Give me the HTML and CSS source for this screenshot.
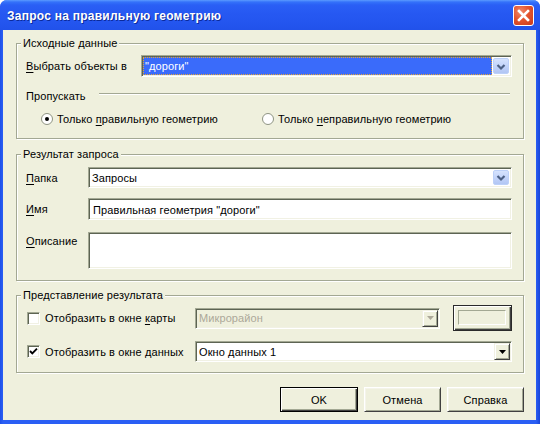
FILE: index.html
```html
<!DOCTYPE html>
<html lang="ru">
<head>
<meta charset="utf-8">
<title>Запрос на правильную геометрию</title>
<link rel="stylesheet" href="styles.css">
</head>
<body>
<div class="window">
  <div class="titlebar">
    <span class="title">Запрос на правильную геометрию</span>
    <span class="close"><svg width="21" height="21" viewBox="0 0 21 21"><path d="M6 6 L15 15 M15 6 L6 15" stroke="#fff" stroke-width="2.6" stroke-linecap="square"/></svg></span>
  </div>
  <div class="body">
    <fieldset class="group g1">
      <legend>Исходные данные</legend>
      <div class="gbody">
        <div class="row">
          <span class="lbl w-sel"><u>В</u>ыбрать объекты в</span>
          <div class="combo sel grow">
            <span class="val">"дороги"</span>
            <span class="xpbtn"><svg width="16" height="17" viewBox="0 0 16 17"><polyline points="4.5,7 8,10.5 11.5,7" fill="none" stroke="#4D6185" stroke-width="2.2"/></svg></span>
          </div>
        </div>
        <div class="seprow">
          <span>Пропускать</span>
          <span class="etch"></span>
        </div>
        <div class="radios">
          <span class="radio r1"><svg class="rb" width="12" height="12" viewBox="0 0 12 12"><circle cx="6" cy="6" r="5.5" fill="#fff" stroke="#8E9382"/><circle cx="6" cy="6" r="2" fill="#000"/></svg><span>Только <u>п</u>равильную геометрию</span></span>
          <span class="radio"><svg class="rb" width="12" height="12" viewBox="0 0 12 12"><circle cx="6" cy="6" r="5.5" fill="#fff" stroke="#8E9382"/></svg><span>Только <u>н</u>еправильную геометрию</span></span>
        </div>
      </div>
    </fieldset>

    <fieldset class="group g2">
      <legend>Результат запроса</legend>
      <div class="gbody">
        <div class="row">
          <span class="lbl w-f"><u>П</u>апка</span>
          <div class="combo grow">
            <span class="val">Запросы</span>
            <span class="xpbtn"><svg width="16" height="17" viewBox="0 0 16 17"><polyline points="4.5,7 8,10.5 11.5,7" fill="none" stroke="#4D6185" stroke-width="2.2"/></svg></span>
          </div>
        </div>
        <div class="row r-name">
          <span class="lbl w-f"><u>И</u>мя</span>
          <div class="input grow">Правильная геометрия "дороги"</div>
        </div>
        <div class="row r-desc">
          <span class="lbl w-f top"><u>О</u>писание</span>
          <div class="input area grow"></div>
        </div>
      </div>
    </fieldset>

    <fieldset class="group g3">
      <legend>Представление результата</legend>
      <div class="gbody">
        <div class="row r-map">
          <span class="check w-chk"><span class="cb"></span><span>Отобразить в окне <u>к</u>арты</span></span>
          <div class="combo classic disabled w-map">
            <span class="val">Микрорайон</span>
            <span class="clbtn"><svg width="7" height="4" viewBox="0 0 7 4"><path d="M0 0 H7 L3.5 4 Z" fill="#ACA899"/></svg></span>
          </div>
          <span class="colorbtn"><span class="swatch"></span></span>
        </div>
        <div class="row r-data">
          <span class="check w-chk"><span class="cb"><svg width="9" height="9" viewBox="0 0 9 9"><path d="M1 4 L3.3 6.3 L8 1.6" fill="none" stroke="#000" stroke-width="1.9"/></svg></span><span>Отобразить в окне <u>д</u>анных</span></span>
          <div class="combo classic grow">
            <span class="val">Окно данных 1</span>
            <span class="clbtn"><svg width="7" height="4" viewBox="0 0 7 4"><path d="M0 0 H7 L3.5 4 Z" fill="#000"/></svg></span>
          </div>
        </div>
      </div>
    </fieldset>

    <div class="buttons">
      <span class="btn default">OK</span>
      <span class="btn">Отмена</span>
      <span class="btn">Справка</span>
    </div>
  </div>
</div>
</body>
</html>
```
FILE: styles.css
```css
html, body {
  margin: 0;
  padding: 0;
  background: #ffffff;
}
body {
  font-family: "Liberation Sans", Arial, sans-serif;
  font-size: 11px;
  letter-spacing: 0.1px;
  color: #000;
}
u { text-decoration: underline; text-underline-offset: 2px; }

.window {
  width: 540px;
  height: 424px;
  box-sizing: border-box;
  display: flex;
  flex-direction: column;
  background: linear-gradient(90deg, #1E50E8 0, #2A5EF4 3px, #2A5EF4 536px, #1845D8 540px);
  border-radius: 7px 7px 0 0;
  overflow: hidden;
}

.titlebar {
  height: 30px;
  flex: none;
  display: flex;
  align-items: center;
  justify-content: space-between;
  padding: 0 6px 0 7px;
  background: linear-gradient(180deg, #5B9BFF 0, #3472FA 2px, #2A5FF5 5px, #2658F2 14px, #2355EE 24px, #2152EA 30px);
}
.title {
  font-family: "Liberation Sans", Arial, sans-serif;
  font-weight: bold;
  font-size: 12px;
  letter-spacing: 0.25px;
  color: #fff;
  text-shadow: 1px 1px 0 #0B2A9A;
  padding-top: 1px;
}
.close {
  width: 21px;
  height: 21px;
  box-sizing: border-box;
  border: 1px solid #fff;
  border-radius: 3px;
  background: radial-gradient(circle at 35% 30%, #F08A6C 0, #E4552F 45%, #C8381A 100%);
  display: flex;
  margin-top: 1px;
}
.close svg { margin: -1px; }

.body {
  flex: 1;
  margin: 0 4px 4px 3px;
  background: #EFF0DD;
  display: flex;
  flex-direction: column;
  padding: 7px 12px 0 13px;
}

.group {
  margin: 0;
  padding: 0;
  border: 1px solid #A3A893;
  box-shadow: inset 1px 1px 0 #fff, 1px 1px 0 #fff;
  min-width: 0;
}
.group legend {
  padding: 0 2px;
  margin-left: 4px;
  line-height: 13px;
  background: #EFF0DD;
}
.gbody {
  padding: 0 11px 0 9px;
  display: flex;
  flex-direction: column;
}
.g1 .gbody { padding-top: 5px; padding-bottom: 13px; }
.g2 { margin-top: 9px; }
.g2 .gbody { padding-top: 6px; padding-bottom: 11px; }
.g3 { margin-top: 8px; }
.g3 .gbody { padding-top: 3px; padding-bottom: 10px; }

.row {
  display: flex;
  align-items: center;
}
.lbl { flex: none; }
.lbl.top { align-self: flex-start; padding-top: 3px; }
.w-sel { width: 115px; }
.w-f { width: 62px; }
.grow { flex: 1; min-width: 0; }

/* sunken 3D box */
.combo, .input, .cb {
  box-sizing: border-box;
  border: 1px solid;
  border-color: #A3A893 #FFFFFF #FFFFFF #A3A893;
  box-shadow: inset 1px 1px 0 #5D6453, inset -1px -1px 0 #F1F1E4;
  background: #fff;
}

.combo {
  height: 22px;
  display: flex;
  align-items: stretch;
  padding: 1px;
}
.combo .val {
  flex: 1;
  display: flex;
  align-items: center;
  padding-left: 2px;
  white-space: nowrap;
}
.combo.sel .val {
  background: #3A6BFA;
  color: #fff;
  outline: 1px dotted #E5A43A;
  outline-offset: -1px;
  margin-right: 1px;
}
.xpbtn {
  width: 16px;
  flex: none;
  box-sizing: border-box;
  border: 1px solid #BCD0F8;
  border-radius: 2px;
  background: linear-gradient(180deg, #D6E3FD 0, #C3D4FA 50%, #B2C6F4 100%);
  display: flex;
  align-items: center;
  justify-content: center;
  margin: 1px 1px 1px 0;
}
.xpbtn svg { margin: -1px; }
.g2 .combo { height: 21px; }

.input {
  height: 22px;
  padding: 1px 0 0 4px;
  display: flex;
  align-items: center;
  white-space: nowrap;
}
.r-name { margin-top: 10px; }
.r-desc { margin-top: 12px; align-items: flex-start; }
.input.area { height: 37px; }

.seprow {
  display: flex;
  align-items: center;
  margin-top: 12px;
  height: 13px;
  padding-right: 2px;
}
.etch {
  flex: 1;
  margin-left: 13px;
  height: 1px;
  background: #A3A893;
  border-bottom: 1px solid #fff;
  margin-top: -3px;
}

.radios {
  display: flex;
  margin-top: 10px;
  padding-left: 15px;
  height: 13px;
  align-items: center;
}
.radio {
  display: flex;
  align-items: center;
  white-space: nowrap;
}
.radio .rb { margin-right: 4px; flex: none; }
.radio.r1 { width: 221px; }

.check {
  display: flex;
  align-items: center;
  white-space: nowrap;
  flex: none;
}
.w-chk { width: 168px; padding-left: 1px; }
.cb {
  width: 13px;
  height: 13px;
  margin-right: 5px;
  display: flex;
  align-items: center;
  justify-content: center;
  flex: none;
}

.r-map { height: 26px; }
.r-data { margin-top: 10px; }

.combo.classic { height: 21px; }
.w-map { width: 245px; flex: none; }
.combo.disabled { background: #EFF0DD; color: #ACA899; }
.clbtn {
  width: 16px;
  flex: none;
  box-sizing: border-box;
  background: #EFF0DD;
  border: 1px solid;
  border-color: #F1F1E4 #404040 #404040 #F1F1E4;
  box-shadow: inset 1px 1px 0 #fff, inset -1px -1px 0 #A3A893;
  display: flex;
  align-items: center;
  justify-content: center;
}

.colorbtn {
  margin-left: 13px;
  width: 60px;
  height: 26px;
  box-sizing: border-box;
  border: 1px solid #2A2A2A;
  box-shadow: inset 1px 1px 0 #fff, inset -1px -1px 0 #404040, inset -2px -2px 0 #A3A893;
  background: #EFF0DD;
  padding: 4px 5px 5px 4px;
  display: flex;
}
.swatch {
  flex: 1;
  border: 1px solid;
  border-color: #A3A893 #fff #fff #A3A893;
}

.buttons {
  display: flex;
  justify-content: flex-end;
  gap: 6px;
  margin-top: 14px;
}
.btn {
  width: 77px;
  height: 25px;
  box-sizing: border-box;
  display: flex;
  align-items: center;
  justify-content: center;
  background: #EFF0DD;
  border: 1px solid;
  border-color: #fff #404040 #404040 #fff;
  box-shadow: inset 1px 1px 0 #F4F4EA, inset -1px -1px 0 #A3A893;
}
.btn.default {
  width: 78px;
  border-color: #000;
  box-shadow: inset 1px 1px 0 #fff, inset -1px -1px 0 #404040, inset -2px -2px 0 #A3A893;
}
```
